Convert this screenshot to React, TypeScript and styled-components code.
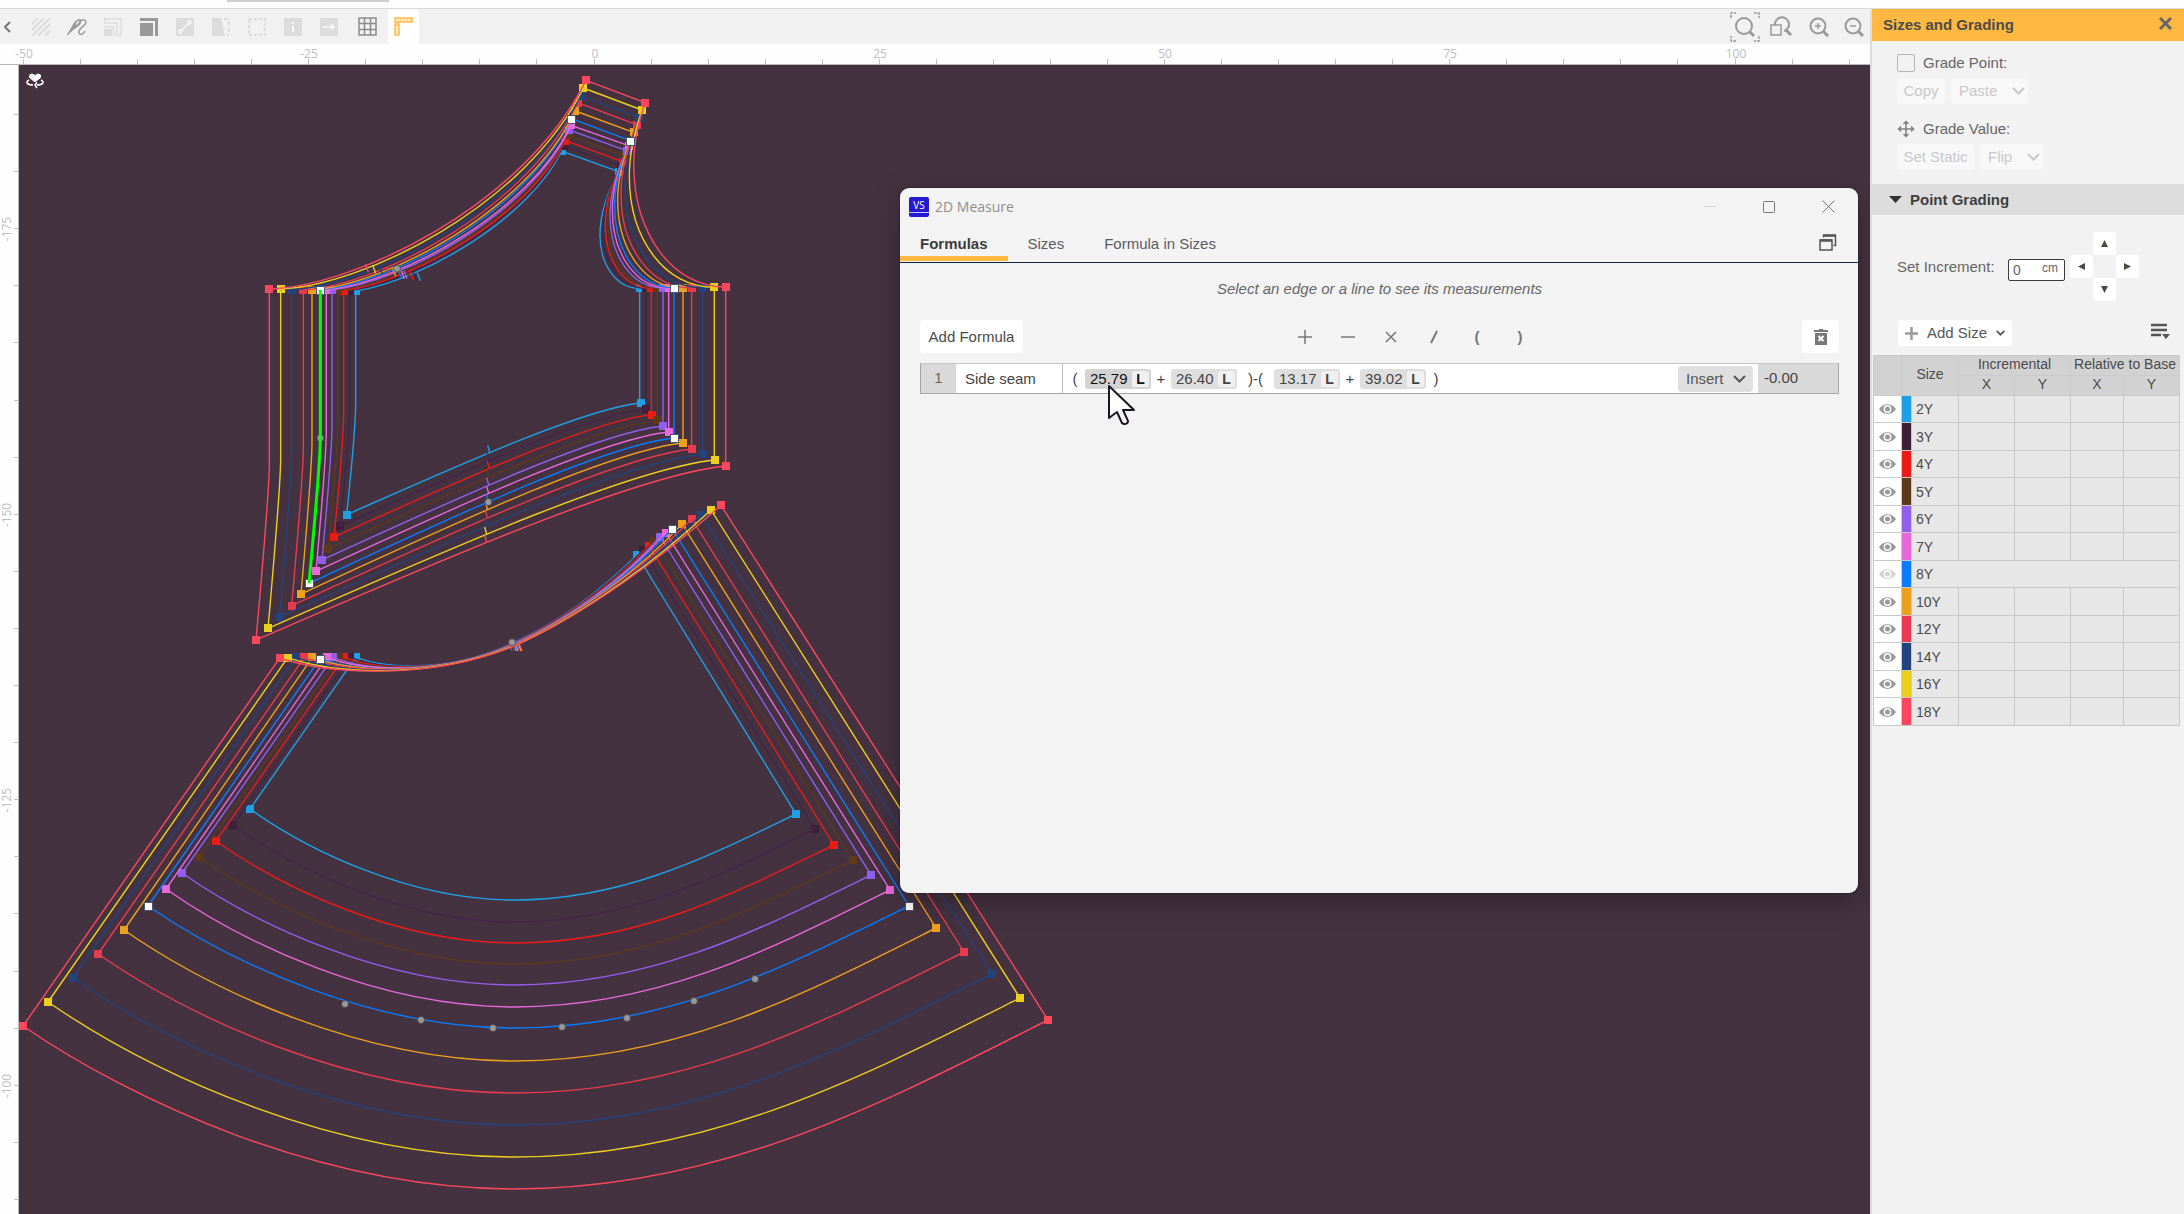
import React from "react";
import styled, { createGlobalStyle } from "styled-components";

/* ---------- data ---------- */

type Pt = [number, number];

interface SizeSpec {
  name: string;
  color: string;
  line?: string;
  strapL: Pt;
  strapR: Pt;
  arm: Pt;
  underR: Pt;
  lowR: Pt;
  lowL: Pt;
  underL: Pt;
  notch: Pt;
  neckNotch: Pt;
  waistL: Pt;
  waistR: Pt;
  hemL: Pt;
  hemR: Pt;
  hemY: number;
}

/* Bodice and waist points are in thirds of a pixel, hem points in whole canvas units. */
const SIZES: SizeSpec[] = [
  { name: "2Y", color: "#1ea0e6", strapL: [965, 273], strapR: [1136, 335], arm: [1080, 525], underR: [1199, 685], lowR: [1202, 1029], lowL: [320, 1364], underL: [347, 693], notch: [749, 1177], neckNotch: [532, 638], waistL: [347, 1792], waistR: [1191, 1485], hemL: [250, 809], hemR: [796, 814], hemY: 900 },
  { name: "3Y", color: "#3d1f38", line: "#42264a", strapL: [971, 257], strapR: [1142, 319], arm: [1088, 510], underR: [1217, 685], lowR: [1219, 1047], lowL: [301, 1398], underL: [329, 692], notch: [748, 1201], neckNotch: [521, 638], waistL: [330, 1792], waistR: [1210, 1470], hemL: [233, 825], hemR: [815, 829], hemY: 922 },
  { name: "4Y", color: "#eb1c18", strapL: [976, 242], strapR: [1148, 305], arm: [1096, 495], underR: [1234, 685], lowR: [1236, 1064], lowL: [282, 1431], underL: [311, 692], notch: [748, 1225], neckNotch: [511, 636], waistL: [312, 1792], waistR: [1227, 1457], hemL: [216, 841], hemR: [834, 845], hemY: 943 },
  { name: "5Y", color: "#5e3a18", strapL: [982, 225], strapR: [1154, 288], arm: [1103, 480], underR: [1252, 685], lowR: [1254, 1081], lowL: [264, 1466], underL: [294, 691], notch: [747, 1250], neckNotch: [501, 634], waistL: [296, 1792], waistR: [1243, 1443], hemL: [199, 857], hemR: [853, 860], hemY: 964 },
  { name: "6Y", color: "#915feb", strapL: [988, 210], strapR: [1160, 272], arm: [1110, 465], underR: [1269, 684], lowR: [1270, 1098], lowL: [246, 1500], underL: [276, 690], notch: [746, 1274], neckNotch: [492, 632], waistL: [279, 1792], waistR: [1260, 1430], hemL: [182, 873], hemR: [871, 875], hemY: 985 },
  { name: "7Y", color: "#e868dc", strapL: [993, 196], strapR: [1166, 257], arm: [1117, 450], underR: [1286, 684], lowR: [1287, 1116], lowL: [228, 1534], underL: [259, 690], notch: [746, 1300], neckNotch: [484, 632], waistL: [261, 1792], waistR: [1277, 1418], hemL: [166, 889], hemR: [890, 890], hemY: 1007 },
  { name: "8Y", color: "#0a7cff", strapL: [994, 176], strapR: [1171, 242], arm: [1124, 438], underR: [1302, 683], lowR: [1302, 1134], lowL: [207, 1570], underL: [241, 689], notch: [745, 1324], neckNotch: [474, 628], waistL: [240, 1796], waistR: [1296, 1406], hemL: [148, 906], hemR: [909, 906], hemY: 1028 },
  { name: "10Y", color: "#eda01e", strapL: [1006, 153], strapR: [1181, 217], arm: [1133, 420], underR: [1329, 684], lowR: [1329, 1149], lowL: [183, 1602], underL: [216, 690], notch: [743, 1350], neckNotch: [458, 625], waistL: [217, 1792], waistR: [1326, 1392], hemL: [124, 930], hemR: [936, 928], hemY: 1061 },
  { name: "12Y", color: "#e63b50", strapL: [1013, 128], strapR: [1190, 194], arm: [1143, 402], underR: [1355, 684], lowR: [1356, 1167], lowL: [155, 1637], underL: [190, 690], notch: [742, 1373], neckNotch: [438, 622], waistL: [193, 1792], waistR: [1355, 1377], hemL: [98, 954], hemR: [964, 952], hemY: 1093 },
  { name: "14Y", color: "#23447d", strapL: [1022, 107], strapR: [1198, 173], arm: [1155, 380], underR: [1388, 683], lowR: [1390, 1182], lowL: [119, 1671], underL: [155, 689], notch: [741, 1398], neckNotch: [418, 619], waistL: [168, 1792], waistR: [1384, 1364], hemL: [73, 978], hemR: [992, 974], hemY: 1125 },
  { name: "16Y", color: "#ebcf1e", strapL: [1030, 84], strapR: [1206, 150], arm: [1168, 348], underR: [1423, 682], lowR: [1425, 1200], lowL: [84, 1705], underL: [122, 687], notch: [740, 1422], neckNotch: [398, 616], waistL: [143, 1793], waistR: [1413, 1350], hemL: [48, 1002], hemR: [1020, 998], hemY: 1157 },
  { name: "18Y", color: "#fb485e", strapL: [1038, 61], strapR: [1215, 128], arm: [1181, 310], underR: [1457, 681], lowR: [1458, 1218], lowL: [48, 1740], underL: [88, 687], notch: [740, 1447], neckNotch: [376, 613], waistL: [119, 1794], waistR: [1443, 1336], hemL: [23, 1026], hemR: [1048, 1020], hemY: 1189 },
];

const HEM_DOTS: Pt[] = [[345, 1004], [421, 1020], [493, 1028], [562, 1027], [627, 1018], [694, 1001], [755, 979]];
const BODICE_DOTS: Pt[] = [[471, 626], [241, 1134], [745, 1326], [816, 1747]];

const OPERATORS = ["+", "−", "×", "/", "(", ")"];

type Token = { text: string; wide?: boolean } | { value: string; hot?: boolean };
const FORMULA: Token[] = [
  { text: "(" }, { value: "25.79", hot: true }, { text: "+" }, { value: "26.40" },
  { text: ")-(", wide: true }, { value: "13.17" }, { text: "+" }, { value: "39.02" }, { text: ")" },
];

/* ---------- shared ---------- */

const SANS = `"Liberation Sans", Arial, sans-serif`;
const UI = `"Open Sans", "Noto Sans", sans-serif`;

const Global = createGlobalStyle`
  *, *::before, *::after { box-sizing: border-box; }
  body { margin: 0; background: #f2f2f2; overflow: hidden; }
  button, input, select { font: inherit; color: inherit; margin: 0; }
  button { border: 0; padding: 0; background: none; }
`;

const Shell = styled.div`
  display: flex;
  flex-direction: column;
  height: 100vh;
  font: 15px/20px ${SANS};
  color: #444;
`;

const TopStrip = styled.header`
  height: 9px;
  flex: none;
  padding-left: 227px;
  background: #fdfdfd;
  border-bottom: 1px solid #dadada;
`;

const TopTab = styled.div`
  width: 162px;
  height: 2px;
  background: #cfcfcf;
`;

const Main = styled.div`
  flex: 1;
  display: flex;
  min-height: 0;
`;

const Workspace = styled.main`
  flex: 1;
  min-width: 0;
  display: flex;
  flex-direction: column;
  border-right: 2px solid #dcdcdc;
`;

/* ---------- toolbar ---------- */

const Toolbar = styled.div`
  height: 35px;
  flex: none;
  display: flex;
  align-items: center;
  justify-content: space-between;
  background: #f1f1f1;
`;

const ToolGroup = styled.div`
  display: flex;
  align-items: center;
`;

const ToolButton = styled.button<{ $tone?: string; $active?: boolean; $w?: number }>`
  width: ${(p) => p.$w ?? 36}px;
  height: 35px;
  display: grid;
  place-items: center;
  color: ${(p) => p.$tone ?? "#dcdcdc"};
  background: ${(p) => (p.$active ? "#fff" : "none")};
  border-radius: 4px;
`;

const Glyph = ({ size = 18, box = 18, children }: { size?: number; box?: number; children: React.ReactNode }) => (
  <svg width={size} height={size} viewBox={`0 0 ${box} ${box}`} fill="none" stroke="currentColor" strokeWidth="2" aria-hidden="true">
    {children}
  </svg>
);

const LEFT_TOOLS: { label: string; tone?: string; active?: boolean; w?: number; icon: React.ReactNode }[] = [
  { label: "Back", tone: "#777", w: 23, icon: <Glyph><path d="M7 4 2 9l5 5" /></Glyph> },
  { label: "Hatch", icon: <Glyph><path d="M0 6 6 0M0 12 12 0M0 18 18 0M6 18 18 6M13 18l5-5" /></Glyph> },
  {
    label: "Needle", tone: "#999",
    icon: (
      <Glyph size={20} box={20}>
        <path d="M0 18 5 9C7 5 10 2 13 2l1 1c1 4-2 6-5 8l-6 4z" fill="currentColor" stroke="none" />
        <path d="M0 18 6 12" strokeWidth="1.200" />
        <path d="M9 7.500 12 4" stroke="#f1f1f1" strokeWidth="1.300" />
        <path d="M13 4c3-2 6-1 6 1 0 4-6 5-7 9-1 5 4 4 6 0" strokeWidth="1.500" />
      </Glyph>
    ),
  },
  { label: "Offset", icon: <Glyph><path d="M.7 5V.7h16.600v16.600H13M0 5h13v13" strokeWidth="1.400" /><path d="M4 9h5.500v9M0 9h4" strokeWidth="1.400" /><path d="M0 11h8v7H0z" fill="currentColor" stroke="none" /></Glyph> },
  { label: "Seam", tone: "#999", icon: <Glyph><path d="M0 5h13v13H0z" fill="currentColor" stroke="none" /><path d="M0 1.500h16.500V18" strokeWidth="3" /></Glyph> },
  { label: "Line", icon: <Glyph><rect width="18" height="18" rx="1" fill="currentColor" stroke="none" /><path d="M4 14 14 4" stroke="#f8f8f8" strokeWidth="1.500" /><circle cx="4.500" cy="13.500" r="1.500" fill="currentColor" stroke="#f8f8f8" strokeWidth="1.500" /><circle cx="13.500" cy="4.500" r="1.500" fill="currentColor" stroke="#f8f8f8" strokeWidth="1.500" /></Glyph> },
  { label: "Mirror", icon: <Glyph><path d="M0 0h9l4 18H0z" fill="currentColor" stroke="none" /><path d="M12 1h5v16h-2" strokeDasharray="4 3" /></Glyph> },
  { label: "Select box", icon: <Glyph><rect x="1" y="1" width="16" height="16" strokeDasharray="3 2" strokeWidth="2.500" /></Glyph> },
  { label: "Info", icon: <Glyph><rect width="18" height="18" rx="1" fill="currentColor" stroke="none" /><path d="M9 4v2M9 8v6" stroke="#f8f8f8" /></Glyph> },
  { label: "Arrow", icon: <Glyph><rect width="18" height="18" rx="1" fill="currentColor" stroke="none" /><path d="M3 9h11M11 6l3 3-3 3" stroke="#f8f8f8" strokeWidth="1.500" /></Glyph> },
  { label: "Grid", tone: "#8c8c8c", w: 41, icon: <Glyph size={19} box={19}><path d="M1 1h17v17H1zM1 6.500h17M1 12.500h17M6.500 1v17M12.500 1v17" strokeWidth="1.500" /></Glyph> },
  {
    label: "Measure", tone: "#ffb840", active: true, w: 31,
    icon: (
      <Glyph size={19} box={19}>
        <path d="M1 1h17v4H1zM1 7h4v11H1z" strokeWidth="1.500" />
        <path d="M4 2v2M7 2v2M10 2v2M13 2v2M16 2v2M2 9h2M2 12h2M2 15h2" strokeWidth="1.200" />
      </Glyph>
    ),
  },
];

const ZOOM_TOOLS: { label: string; w: number; icon: React.ReactNode }[] = [
  { label: "Zoom to fit", w: 34, icon: <Glyph size={30} box={30}><path d="M1 6V1h5M24 1h5v5M29 24v5h-5M6 29H1v-5" strokeWidth="1.500" strokeDasharray="3 1" /><circle cx="14" cy="14" r="8" /><path d="m20 20 4 4" strokeWidth="3" /></Glyph> },
  { label: "Zoom to box", w: 38, icon: <Glyph size={22} box={22}><path d="M5 9A7 7 0 1 1 14 15" /><path d="m16 14 5 5" strokeWidth="3" /><path d="M1 9h10v10H1z" strokeWidth="1.500" /></Glyph> },
  { label: "Zoom in", w: 38, icon: <Glyph size={20} box={20}><circle cx="9" cy="9" r="7.500" /><path d="m14 14 5 5" strokeWidth="3" /><path d="M6 9h6M9 6v6" strokeWidth="1.500" /></Glyph> },
  { label: "Zoom out", w: 32, icon: <Glyph size={20} box={20}><circle cx="9" cy="9" r="7.500" /><path d="m14 14 5 5" strokeWidth="3" /><path d="M6 9h6" strokeWidth="1.500" /></Glyph> },
];

/* ---------- rulers ---------- */

const RulerTop = styled.svg`
  display: block;
  flex: none;
  width: 100%;
  height: 21px;
  background: #fefefe;
  border-bottom: 1px solid #b8b8b8;
`;

const RulerSide = styled.svg`
  display: block;
  flex: none;
  width: 19px;
  height: 100%;
  background: #fefefe;
  border-right: 1px solid #b8b8b8;
`;

const RulerText = styled.text`
  font: 12px ${UI};
  fill: #bdbdbd;
  text-anchor: middle;
`;

const STEP = 57.05;

function HorizontalRuler() {
  const ticks = Array.from({ length: 33 }, (_, i) => i);
  return (
    <RulerTop>
      {ticks.map((i) => (
        <path key={i} d={`M${Math.round(23 + i * STEP) + 0.5} 15v6`} stroke="#c0c0c0" />
      ))}
      {ticks.filter((i) => i % 5 === 0).map((i) => (
        <RulerText key={i} x={Math.round(24 + i * STEP)} y={14}>{i * 5 - 50}</RulerText>
      ))}
    </RulerTop>
  );
}

function VerticalRuler() {
  const ticks = Array.from({ length: 21 }, (_, i) => i);
  return (
    <RulerSide>
      {ticks.map((i) => (
        <path key={i} d={`M14 ${Math.round(49 + i * 57.1) + 0.5}h5`} stroke="#c0c0c0" />
      ))}
      {[0, 1, 2, 3].map((i) => (
        <RulerText key={i} x={0} y={0} transform={`translate(11 ${Math.round(164 + i * 285.5)}) rotate(-90)`}>{i * 25 - 175}</RulerText>
      ))}
    </RulerSide>
  );
}

/* ---------- canvas ---------- */

const CanvasRow = styled.div`
  flex: 1;
  display: flex;
  min-height: 0;
`;

const Canvas = styled.section`
  position: relative;
  flex: 1;
  min-width: 0;
  overflow: hidden;
  background: #453241;
`;

const Drawing = styled.svg`
  position: absolute;
  inset: 0;
  width: 100%;
  height: 100%;
`;

const px = ([x, y]: Pt): Pt => [240 + x / 3, 60 + y / 3];
const mix = (a: number, b: number, t: number) => a + (b - a) * t;
const mixPt = (a: Pt, b: Pt, t: number): Pt => [mix(a[0], b[0], t), mix(a[1], b[1], t)];

function bodicePath(s: SizeSpec, t: number) {
  const { strapL: A, strapR: B, arm: W, underR: C, lowR: D, lowL: E, underL: F } = s;
  const w = A[0] - F[0];
  const h = F[1] - A[1];
  const n1: Pt = [F[0] + w * mix(0.34, 0.265, t), F[1] - h * mix(0.08, 0.011, t)];
  const n2: Pt = [A[0] - w * mix(0.154, 0.198, t), A[1] + h * mix(0.469, 0.605, t)];
  const q: Pt = [W[0], mix(B[1], W[1], 0.55)];
  const a1: Pt = [W[0], mix(W[1], C[1], 0.57)];
  const a2: Pt = [mix(W[0], C[0], 0.42), C[1]];
  const bw = D[0] - E[0];
  const bh = E[1] - D[1];
  const b1: Pt = [D[0] - bw * 0.197, D[1] + bh * 0.05];
  const b2: Pt = [E[0] + bw * 0.34, E[1] - bh * 0.394];
  const m = (p: Pt) => px(p).join(" ");
  return `M${m(F)}C${m(n1)} ${m(n2)} ${m(A)}L${m(B)}Q${m(q)} ${m(W)}C${m(a1)} ${m(a2)} ${m(C)}L${m([C[0], D[1]])}L${m(D)}C${m(b1)} ${m(b2)} ${m(E)}${sidePath(s, "L")}`;
}

function sidePath({ lowL: E, underL: F }: SizeSpec, start: string) {
  const m = (p: Pt) => px(p).join(" ");
  const knee = mix(F[1], E[1], 0.5);
  return `${start}${m(E)}Q${m([F[0], knee + 80])} ${m([F[0], knee])}L${m(F)}`;
}

function skirtPath(s: SizeSpec, t: number) {
  const m = (p: Pt) => px(p).join(" ");
  const l1 = mixPt([450, 1830], [260, 1840], t);
  const l2 = mixPt([640, 1834], [560, 1866], t);
  const mid = mixPt([816, 1749], [830, 1755], t);
  const r1 = mixPt([950, 1690], [1040, 1660], t);
  const r2 = mixPt([1080, 1595], [1270, 1490], t);
  const low: Pt = [514, s.hemY];
  const J = s.hemL;
  const K = s.hemR;
  const wr = K[0] - low[0];
  const wl = low[0] - J[0];
  return (
    `M${J}L${m(s.waistL)}C${m(l1)} ${m(l2)} ${m(mid)}C${m(r1)} ${m(r2)} ${m(s.waistR)}L${K}` +
    `C${K[0] - wr * 0.314} ${mix(K[1], low[1], 0.5)} ${low[0] + wr * 0.386} ${low[1]} ${low}` +
    `C${low[0] - wl * 0.395} ${low[1]} ${J[0] + wl * 0.218} ${mix(J[1], low[1], 0.451)} ${J}`
  );
}

function Marker({ at, base, color }: { at: Pt; base: boolean; color: string }) {
  const x = Math.round(at[0]);
  const y = Math.round(at[1]);
  return base ? (
    <rect x={x - 3.5} y={y - 3.5} width="8" height="8" fill="#fff" stroke="#4a5570" strokeWidth="1" />
  ) : (
    <rect x={x - 4} y={y - 4} width="8" height="8" fill={color} />
  );
}

function Pattern() {
  const ordered = [...SIZES].sort((a, b) => Number(a.name === "8Y") - Number(b.name === "8Y"));
  const base = SIZES.find((s) => s.name === "8Y")!;
  return (
    <Drawing aria-label="Pattern pieces">
      <g transform="translate(-19 -65)" fill="none" strokeWidth="1.400">
        {ordered.map((s) => (
          <g key={s.name}>
            {[s.strapL, s.strapR, s.underR, s.lowR, s.lowL, s.underL, s.waistL, s.waistR].map((p, k) => (
              <Marker key={k} at={px(p)} base={s === base} color={s.color} />
            ))}
            <Marker at={s.hemL} base={s === base} color={s.color} />
            <Marker at={s.hemR} base={s === base} color={s.color} />
          </g>
        ))}
        {SIZES.map((s, i) => (
          <g key={s.name} stroke={s.line ?? s.color}>
            <path d={bodicePath(s, i / 11)} />
            <path d={skirtPath(s, i / 11)} />
            <path d={`M${px(s.notch)}l-2 -7M${px(s.neckNotch)}l3 8M${px([816 + i * 2, 1752])}l${i / 4} 7`} />
          </g>
        ))}
        {[base.strapL, base.strapR, base.underR, base.lowR, base.underL, base.lowL, base.waistL, base.waistR].map((p, k) => (
          <Marker key={k} at={px(p)} base color={base.color} />
        ))}
        <Marker at={base.hemL} base color={base.color} />
        <Marker at={base.hemR} base color={base.color} />
        {[...HEM_DOTS, ...BODICE_DOTS.map(px)].map(([x, y], k) => (
          <circle key={k} cx={x} cy={y} r="3.500" fill="#999" stroke="#444" strokeWidth="0.8" />
        ))}
        <path d={sidePath(base, "M")} stroke="#00ff00" strokeWidth="3" />
        <g transform="translate(26 73)" stroke="#fff">
          <path d="M9 9 3.500 4.500V2L6 1l3 1.500L12 1l2.500 1v2.500z" fill="#fff" strokeWidth="1" />
          <path d="M3 7C-1 9 1 12 7 12M15 7c4 2 2 5-4 5M11 9.500 9 12l2 3" strokeWidth="1.500" />
        </g>
      </g>
    </Drawing>
  );
}

/* ---------- measure window ---------- */

const Window = styled.section`
  position: absolute;
  top: 123px;
  left: 881px;
  right: 12px;
  min-height: 705px;
  background: #f3f3f3;
  border-radius: 9px;
  box-shadow: 0 8px 28px rgba(0, 0, 0, 0.3), 0 0 2px rgba(0, 0, 0, 0.5);
`;

const TitleBar = styled.header`
  display: flex;
  align-items: center;
  gap: 6px;
  height: 37px;
  padding: 0 18px 0 9px;
`;

const AppBadge = styled.div`
  display: grid;
  place-items: center;
  width: 20px;
  height: 20px;
  padding-bottom: 3px;
  border-radius: 2px;
  background: linear-gradient(#2418d0 15px, #c9c6ff 15px, #c9c6ff 16px, #2418d0 16px);
  color: #fff;
  font: 10px/14px ${UI};
`;

const WindowTitle = styled.h1`
  flex: 1;
  margin: 0;
  font: 14px/20px ${UI};
  color: #8f8f8f;
`;

const CaptionButton = styled.button<{ $dim?: boolean }>`
  display: grid;
  place-items: center;
  width: 24px;
  height: 24px;
  margin-left: 29px;
  color: ${(p) => (p.$dim ? "#d4d4d4" : "#777")};
`;

const TabRow = styled.div`
  display: flex;
  align-items: stretch;
  height: 38px;
  padding-right: 20px;
  border-bottom: 1px solid #1c2140;
`;

const Tab = styled.button<{ $active?: boolean }>`
  height: 36px;
  padding: 9px 20px 2px;
  border-bottom: 5px solid ${(p) => (p.$active ? "#ffb840" : "transparent")};
  font-weight: ${(p) => (p.$active ? 700 : 400)};
  color: ${(p) => (p.$active ? "#3c3c3c" : "#5c5c66")};
`;

const RestoreButton = styled.button`
  margin: 8px 0 0 auto;
  width: 20px;
  height: 24px;
  color: #555;
`;

const Body = styled.div`
  padding: 16px 19px 0 20px;
`;

const Hint = styled.p`
  margin: 0 0 21px;
  text-align: center;
  font-style: italic;
  color: #666;
`;

const Actions = styled.div`
  display: grid;
  grid-template-columns: 1fr auto 1fr;
  align-items: center;
  margin-bottom: 10px;
`;

const WhiteButton = styled.button<{ $w: number }>`
  width: ${(p) => p.$w}px;
  height: 33px;
  border-radius: 4px;
  background: #fff;
  color: #4a4a4a;
  display: grid;
  place-items: center;
`;

const Operators = styled.div`
  display: flex;
  padding-left: 66px;
`;

const Operator = styled.button`
  width: 43px;
  height: 33px;
  font-size: 15px;
  color: #777;
  display: grid;
  place-items: center;
`;

const EndSlot = styled.div`
  display: flex;
  justify-content: flex-end;
`;

const FormulaRow = styled.div`
  display: flex;
  height: 31px;
  border: 1px solid #a6a6a6;
  border-top-color: #c6c6c6;
  background: #fff;
`;

const RowIndex = styled.div`
  width: 35px;
  padding: 4px 0;
  text-align: center;
  background: #d9d9d9;
  color: #6c6650;
`;

const NameInput = styled.input`
  width: 107px;
  padding: 0 9px;
  border: 0;
  border-right: 1px solid #bdbdbd;
  background: none;
  outline: none;
`;

const Expression = styled.div`
  flex: 1;
  display: flex;
  align-items: center;
  padding-left: 2px;
`;

const Sign = styled.span<{ $wide?: boolean }>`
  width: ${(p) => (p.$wide ? 37 : 20)}px;
  text-align: center;
`;

const Chip = styled.button<{ $hot?: boolean }>`
  display: flex;
  align-items: center;
  justify-content: space-between;
  width: 66px;
  height: 20px;
  padding: 0 2px 0 5px;
  border-radius: 3px;
  background: ${(p) => (p.$hot ? "#d4d4d4" : "#dfdfdf")};
  color: ${(p) => (p.$hot ? "#111" : "#444")};
`;

const ChipTag = styled.b`
  width: 17px;
  height: 16px;
  border-radius: 2px;
  background: #f0f0f0;
  font: 700 14px/16px ${SANS};
  text-align: center;
`;

const Result = styled.output`
  width: 80px;
  padding: 4px 6px;
  background: #d9d9d9;
`;

const SelectWrap = styled.label<{ $w: number; $bg: string; $fg: string; $right: number }>`
  display: grid;
  align-items: center;
  width: ${(p) => p.$w}px;
  height: 26px;
  border-radius: 4px;
  background: ${(p) => p.$bg};
  color: ${(p) => p.$fg};
  > * { grid-area: 1 / 1; }
  > svg { justify-self: end; margin-right: ${(p) => p.$right}px; pointer-events: none; }
`;

const Select = styled.select`
  appearance: none;
  width: 100%;
  height: 26px;
  padding: 0 0 0 8px;
  border: 0;
  background: none;
  opacity: 1;
`;

const InsertSlot = styled.div`
  padding: 2px 5px 0 0;
`;

const Cursor = styled.svg`
  position: absolute;
  left: 207px;
  top: 195px;
  pointer-events: none;
`;

const Chevron = ({ w = 13, stroke = 2 }: { w?: number; stroke?: number }) => (
  <svg width={w} height="8" viewBox="0 0 13 8" fill="none" stroke="currentColor" strokeWidth={stroke} aria-hidden="true">
    <path d="m1 1 5.500 5.500L12 1" />
  </svg>
);

function MeasureWindow() {
  return (
    <Window aria-label="2D Measure">
      <TitleBar>
        <AppBadge>VS</AppBadge>
        <WindowTitle>2D Measure</WindowTitle>
        <CaptionButton $dim aria-label="Minimize"><svg width="12" height="12" stroke="currentColor"><path d="M0 5.500h12" /></svg></CaptionButton>
        <CaptionButton aria-label="Maximize"><svg width="12" height="12" fill="none" stroke="currentColor"><rect x=".5" y=".5" width="11" height="11" rx="1" /></svg></CaptionButton>
        <CaptionButton aria-label="Close"><svg width="13" height="13" stroke="currentColor"><path d="m.5.5 12 12m0-12-12 12" /></svg></CaptionButton>
      </TitleBar>
      <TabRow>
        <Tab $active>Formulas</Tab>
        <Tab>Sizes</Tab>
        <Tab>Formula in Sizes</Tab>
        <RestoreButton aria-label="Dock window">
          <svg width="18" height="17" fill="none" stroke="currentColor" strokeWidth="1.500">
            <path d="M4.500 3.500V1.500H16.500V11.500H14.500" /><path d="M4 1.500h13M1 6.500h12" strokeWidth="2.500" /><path d="M1 6h12v10H1z" />
          </svg>
        </RestoreButton>
      </TabRow>
      <Body>
        <Hint>Select an edge or a line to see its measurements</Hint>
        <Actions>
          <WhiteButton $w={103}>Add Formula</WhiteButton>
          <Operators>
            {OPERATORS.map((op) => (
              <Operator key={op} aria-label={`Insert ${op}`}>
                {op === "+" || op === "−" || op === "×" ? (
                  <svg width="14" height="14" stroke="currentColor" strokeWidth="1.500">
                    <path d={op === "+" ? "M0 7h14M7 0v14" : op === "−" ? "M0 7h14" : "m2 2 10 10m0-10-10 10"} />
                  </svg>
                ) : op === "/" ? (
                  <svg width="14" height="14" stroke="currentColor" strokeWidth="2"><path d="M4 13 10 1" /></svg>
                ) : (
                  <b>{op}</b>
                )}
              </Operator>
            ))}
          </Operators>
          <EndSlot>
            <WhiteButton $w={37} aria-label="Delete formula">
              <svg width="14" height="16" fill="#777">
                <path d="M5 0h4v1h5v2H0V1h5zM1 4h12v12H1z" /><path d="m4.500 7 5 5m0-5-5 5" stroke="#fff" strokeWidth="2" />
              </svg>
            </WhiteButton>
          </EndSlot>
        </Actions>
        <FormulaRow>
          <RowIndex>1</RowIndex>
          <NameInput aria-label="Formula name" defaultValue="Side seam" />
          <Expression>
            {FORMULA.map((t, i) =>
              "value" in t ? (
                <Chip key={i} $hot={t.hot}>{t.value}<ChipTag>L</ChipTag></Chip>
              ) : (
                <Sign key={i} $wide={t.wide}>{t.text}</Sign>
              ),
            )}
          </Expression>
          <InsertSlot>
            <SelectWrap $w={75} $bg="#dfdfdf" $fg="#555" $right={7}>
              <Select aria-label="Insert"><option>Insert</option></Select>
              <Chevron />
            </SelectWrap>
          </InsertSlot>
          <Result>-0.00</Result>
        </FormulaRow>
      </Body>
      <Cursor width="29" height="44" viewBox="0 0 29 44">
        <path d="M2 3v32l8-6 5 11c2 2 6 1 6-2l-5-11h11z" fill="#fff" stroke="#1b1622" strokeWidth="2" strokeLinejoin="round" />
      </Cursor>
    </Window>
  );
}

/* ---------- grading panel ---------- */

const Panel = styled.aside`
  width: 312px;
  flex: none;
  background: #f2f2f2;
`;

const PanelHeader = styled.header`
  display: flex;
  align-items: center;
  justify-content: space-between;
  height: 32px;
  padding: 0 12px 0 11px;
  background: #ffb840;
  color: #4c4c4c;
`;

const PanelTitle = styled.h2`
  margin: 0;
  font: 700 15px/20px ${SANS};
`;

const GradeBlock = styled.div`
  padding: 12px 25px 14px;
`;

const FieldLine = styled.label`
  display: flex;
  align-items: center;
  gap: 8px;
  height: 20px;
  color: #666;
`;

const CheckBox = styled.input`
  appearance: none;
  width: 18px;
  height: 18px;
  border: 1px solid #b5b5b5;
  border-radius: 2px;
`;

const ButtonLine = styled.div`
  display: flex;
  gap: 6px;
  margin: 5px 0 15px;
  &:last-child { margin-bottom: 0; }
`;

const FadedButton = styled.button<{ $w: number }>`
  width: ${(p) => p.$w}px;
  height: 26px;
  border-radius: 3px;
  background: #f8f8f8;
  color: #c8c8c8;
`;

const SectionHeader = styled.h3`
  display: flex;
  align-items: center;
  gap: 8px;
  height: 31px;
  margin: 0;
  padding-left: 17px;
  background: #dddddd;
  font: 700 15px/20px ${SANS};
  color: #3f3f3f;
`;

const IncrementRow = styled.div`
  display: flex;
  align-items: center;
  padding: 17px 0 19px 25px;
  color: #666;
`;

const IncrementLabel = styled.label`
  width: 111px;
`;

const NumberBox = styled.div`
  display: flex;
  align-items: center;
  width: 57px;
  height: 22px;
  margin: 6px 5px 0 0;
  padding: 0 6px 0 4px;
  border: 1px solid #3a3a3a;
  border-radius: 2px;
  background: #fff;
  font-size: 14px;
`;

const NumberInput = styled.input`
  flex: 1;
  min-width: 0;
  width: 20px;
  padding: 0;
  border: 0;
  outline: none;
  background: none;
`;

const Unit = styled.span`
  padding-bottom: 4px;
  font-size: 12px;
  line-height: 14px;
`;

const Pad = styled.div`
  display: grid;
  grid-template: repeat(3, 23px) / repeat(3, 23px);
`;

const PadButton = styled.button<{ $row: number; $col: number }>`
  grid-area: ${(p) => p.$row} / ${(p) => p.$col};
  display: grid;
  place-items: center;
  border-radius: 3px;
  background: #fff;
`;

const AddRow = styled.div`
  display: flex;
  align-items: center;
  justify-content: space-between;
  padding: 0 14px 9px 26px;
`;

const AddSize = styled.button`
  display: flex;
  align-items: center;
  gap: 9px;
  width: 114px;
  height: 26px;
  padding-left: 7px;
  border-radius: 3px;
  background: #fff;
  color: #555;
`;

const Table = styled.table`
  width: 306px;
  margin-left: 1px;
  table-layout: fixed;
  border-collapse: collapse;
  font-size: 14px;
  line-height: 18px;
  color: #4a4a4a;
`;

const Th = styled.th`
  height: 20px;
  padding: 0 0 2px;
  background: #d2d2d2;
  border: 1px solid #cbcbcb;
  font-weight: 400;
  line-height: 17px;
  white-space: nowrap;
`;

const Row = styled.tr`
  height: 27px;
  &:nth-child(even) { height: 28px; }
`;

const Td = styled.td<{ $bg?: string }>`
  padding: 0 0 0 4px;
  border: 1px solid #c9c9c9;
  background: ${(p) => p.$bg ?? "#e7e7e7"};
`;

const EyeCell = styled.td`
  padding: 0;
  border: 1px solid #c9c9c9;
  background: #fff;
`;

const EyeButton = styled.button<{ $dim: boolean }>`
  display: grid;
  place-items: center;
  width: 100%;
  color: ${(p) => (p.$dim ? "#d3d3d3" : "#9a9a9a")};
`;

const PAD: { label: string; row: number; col: number; d: string }[] = [
  { label: "Up", row: 1, col: 2, d: "M1 8 4.500 1 8 8z" },
  { label: "Left", row: 2, col: 1, d: "M8 1 1 4.500 8 8z" },
  { label: "Right", row: 2, col: 3, d: "M1 1l7 3.500L1 8z" },
  { label: "Down", row: 3, col: 2, d: "M1 1 4.500 8 8 1z" },
];

function GradingPanel() {
  return (
    <Panel>
      <PanelHeader>
        <PanelTitle>Sizes and Grading</PanelTitle>
        <button aria-label="Close panel">
          <svg width="13" height="13" stroke="#666" strokeWidth="3"><path d="m1 1 11 11m0-11L1 12" /></svg>
        </button>
      </PanelHeader>
      <GradeBlock>
        <FieldLine><CheckBox type="checkbox" />Grade Point:</FieldLine>
        <ButtonLine>
          <FadedButton $w={48} disabled>Copy</FadedButton>
          <SelectWrap $w={77} $bg="#f8f8f8" $fg="#c8c8c8" $right={3}>
            <Select aria-label="Paste" disabled><option>Paste</option></Select>
            <Chevron />
          </SelectWrap>
        </ButtonLine>
        <FieldLine as="div">
          <svg width="18" height="18" fill="none" stroke="#808080" strokeWidth="1.500">
            <path d="M9 1v16M1 9h16M6.500 4 9 1.500 11.500 4M6.500 14 9 16.500l2.500-2.500M4 6.500 1.500 9 4 11.500M14 6.500 16.500 9 14 11.500" />
          </svg>
          Grade Value:
        </FieldLine>
        <ButtonLine>
          <FadedButton $w={77} disabled>Set Static</FadedButton>
          <SelectWrap $w={63} $bg="#f8f8f8" $fg="#c8c8c8" $right={3}>
            <Select aria-label="Flip" disabled><option>Flip</option></Select>
            <Chevron />
          </SelectWrap>
        </ButtonLine>
      </GradeBlock>
      <SectionHeader>
        <svg width="13" height="7" fill="#333"><path d="M0 0h13L6.500 7z" /></svg>
        Point Grading
      </SectionHeader>
      <IncrementRow>
        <IncrementLabel htmlFor="increment">Set Increment:</IncrementLabel>
        <NumberBox>
          <NumberInput id="increment" defaultValue="0" />
          <Unit>cm</Unit>
        </NumberBox>
        <Pad>
          {PAD.map((b) => (
            <PadButton key={b.label} $row={b.row} $col={b.col} aria-label={b.label}>
              <svg width="9" height="9" fill="#4a4a42"><path d={b.d} /></svg>
            </PadButton>
          ))}
        </Pad>
      </IncrementRow>
      <AddRow>
        <AddSize>
          <svg width="13" height="13" stroke="#999" strokeWidth="2.500"><path d="M0 6.500h13M6.500 0v13" /></svg>
          Add Size
          <Chevron w={9} stroke={2.5} />
        </AddSize>
        <button aria-label="Table options">
          <svg width="19" height="16" stroke="#555" strokeWidth="2.500"><path d="M0 2h16M0 7h16M0 12h10" /><path d="M11 11h8l-4 5z" fill="#555" stroke="none" /></svg>
        </button>
      </AddRow>
      <Table>
        <colgroup>
          {[28, 10, 47, 56, 56, 53, 56].map((w, i) => <col key={i} width={w} />)}
        </colgroup>
        <thead>
          <tr>
            <Th rowSpan={2} />
            <Th rowSpan={2} colSpan={2}>Size</Th>
            <Th colSpan={2}>Incremental</Th>
            <Th colSpan={2}>Relative to Base</Th>
          </tr>
          <tr><Th>X</Th><Th>Y</Th><Th>X</Th><Th>Y</Th></tr>
        </thead>
        <tbody>
          {SIZES.map((s) => (
            <Row key={s.name}>
              <EyeCell>
                <EyeButton $dim={s.name === "8Y"} aria-label={`Show ${s.name}`}>
                  <svg width="17" height="10" fill="currentColor">
                    <path d="M0 5C4-1.500 13-1.500 17 5 13 11.500 4 11.500 0 5z" />
                    <circle cx="8.500" cy="5" r="3.200" stroke="#fff" strokeWidth="1.400" />
                  </svg>
                </EyeButton>
              </EyeCell>
              <Td $bg={s.color} />
              {s.name === "8Y" ? (
                <Td colSpan={5}>{s.name}</Td>
              ) : (
                <><Td>{s.name}</Td><Td /><Td /><Td /><Td /></>
              )}
            </Row>
          ))}
        </tbody>
      </Table>
    </Panel>
  );
}

/* ---------- page ---------- */

export default function App() {
  return (
    <Shell>
      <Global />
      <TopStrip><TopTab /></TopStrip>
      <Main>
        <Workspace>
          <Toolbar>
            <ToolGroup>
              {LEFT_TOOLS.map((t) => (
                <ToolButton key={t.label} aria-label={t.label} $tone={t.tone} $active={t.active} $w={t.w}>{t.icon}</ToolButton>
              ))}
            </ToolGroup>
            <ToolGroup>
              {ZOOM_TOOLS.map((t) => (
                <ToolButton key={t.label} aria-label={t.label} $tone="#999" $w={t.w}>{t.icon}</ToolButton>
              ))}
            </ToolGroup>
          </Toolbar>
          <HorizontalRuler />
          <CanvasRow>
            <VerticalRuler />
            <Canvas>
              <Pattern />
              <MeasureWindow />
            </Canvas>
          </CanvasRow>
        </Workspace>
        <GradingPanel />
      </Main>
    </Shell>
  );
}
